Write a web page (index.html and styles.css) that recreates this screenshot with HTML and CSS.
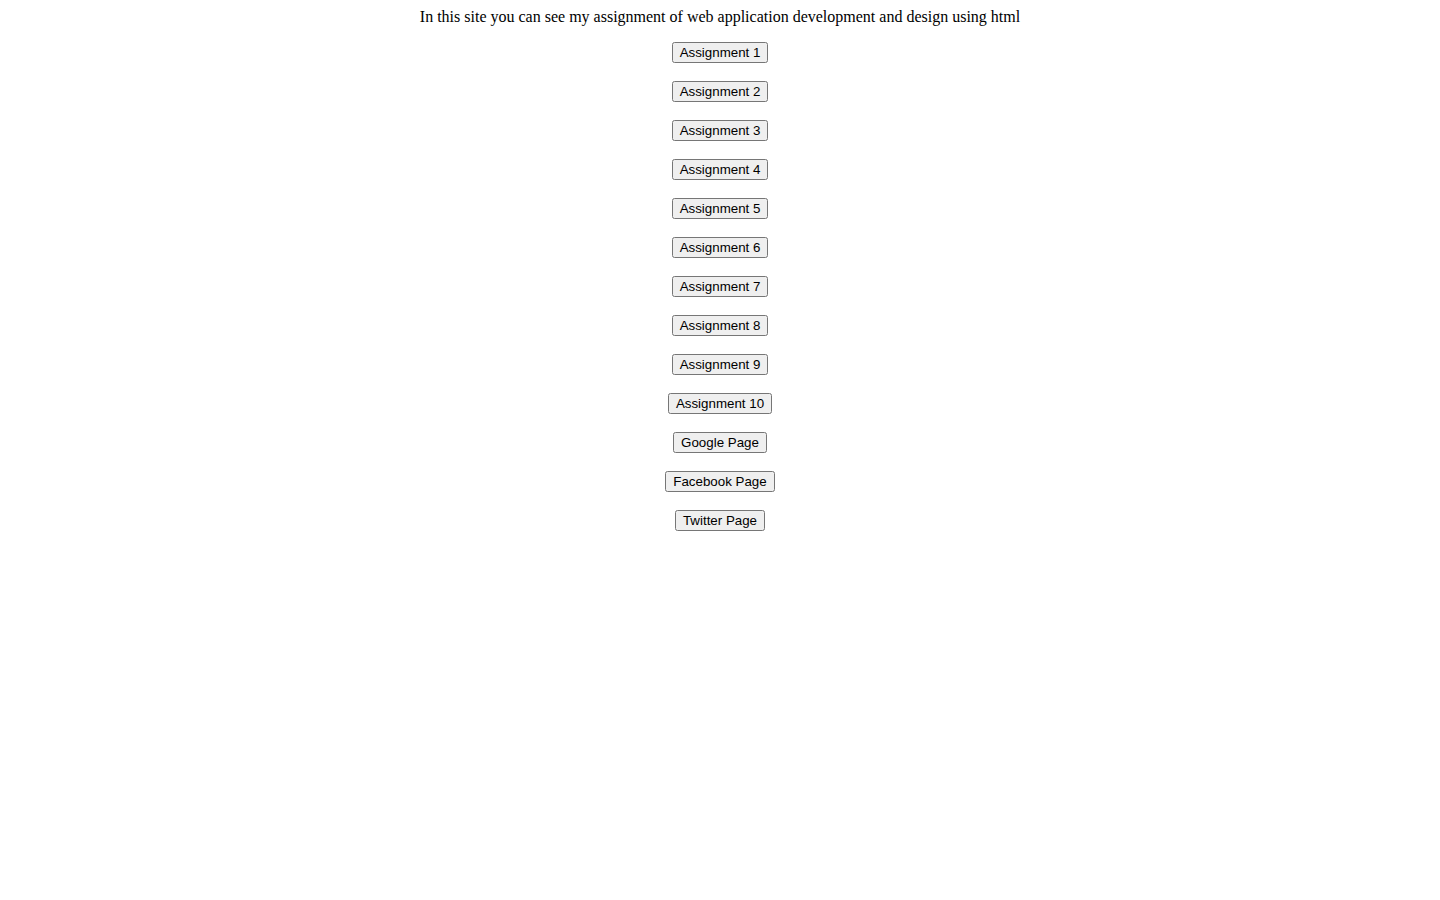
FILE: index.html
```html
<!DOCTYPE html>
<html>
<head>
<meta charset="utf-8">
<title>Assignments</title>
<link rel="stylesheet" href="styles.css">
</head>
<body class="page">
<div class="intro">In this site you can see my assignment of web application development and design using html</div>
<p class="row"><button class="btn">Assignment 1</button></p>
<p class="row"><button class="btn">Assignment 2</button></p>
<p class="row"><button class="btn">Assignment 3</button></p>
<p class="row"><button class="btn">Assignment 4</button></p>
<p class="row"><button class="btn">Assignment 5</button></p>
<p class="row"><button class="btn">Assignment 6</button></p>
<p class="row"><button class="btn">Assignment 7</button></p>
<p class="row"><button class="btn">Assignment 8</button></p>
<p class="row"><button class="btn">Assignment 9</button></p>
<p class="row"><button class="btn">Assignment 10</button></p>
<p class="row"><button class="btn">Google Page</button></p>
<p class="row"><button class="btn">Facebook Page</button></p>
<p class="row"><button class="btn">Twitter Page</button></p>
</body>
</html>
```
FILE: styles.css
```css
.page {
  margin: 8px;
  font-family: "Liberation Serif", serif;
  font-size: 16px;
  text-align: center;
  color: #000;
  background: #fff;
}
.intro {
  margin: 0 0 16px;
}
.row {
  margin: 0 0 18px;
}
.btn {
  font-family: "Liberation Sans", Arial, sans-serif;
  font-size: 13.3333px;
}
```
